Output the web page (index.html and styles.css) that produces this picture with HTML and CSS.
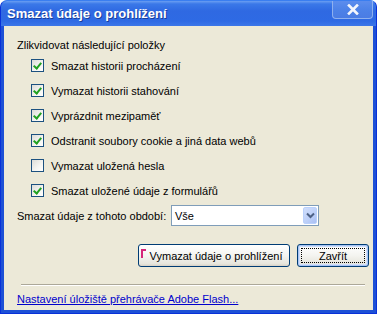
FILE: index.html
```html
<!DOCTYPE html>
<html lang="cs">
<head>
    <meta charset="UTF-8">
    <title>Smazat údaje o prohlížení</title>
    <link rel="stylesheet" href="styles.css">
</head>
<body>
    <div class="window">
        <div class="title-bar">
            <span class="title">Smazat údaje o prohlížení</span>
            <span class="close-btn">
                <svg width="12" height="11" viewBox="0 0 12 11">
                    <path d="M2 1.5 L10 9.5 M10 1.5 L2 9.5" stroke="#f4f6fc" stroke-width="2.6" stroke-linecap="square"/>
                </svg>
            </span>
        </div>
        <div class="content">
            <div class="heading">Zlikvidovat následující položky</div>
            <div class="items">
                <div class="item"><span class="check on"></span>Smazat historii procházení</div>
                <div class="item"><span class="check on"></span>Vymazat historii stahování</div>
                <div class="item"><span class="check on"></span>Vyprázdnit mezipaměť</div>
                <div class="item"><span class="check on"></span>Odstranit soubory cookie a jiná data webů</div>
                <div class="item"><span class="check"></span>Vymazat uložená hesla</div>
                <div class="item"><span class="check on"></span>Smazat uložené údaje z formulářů</div>
            </div>
            <div class="period">
                <span>Smazat údaje z tohoto období:</span>
                <div class="select">
                    <span class="select-value">Vše</span>
                    <span class="select-arrow">
                        <svg width="9" height="7" viewBox="0 0 9 7">
                            <path d="M1 1.5 L4.5 5 L8 1.5" stroke="#4d6185" stroke-width="2" fill="none"/>
                        </svg>
                    </span>
                </div>
            </div>
            <div class="buttons">
                <span class="btn wide"><span class="mark"></span>Vymazat údaje o prohlížení</span>
                <span class="btn default"><span class="focus">Zavřít</span></span>
            </div>
            <div class="separator"></div>
            <a class="flash-link" href="#">Nastavení úložiště přehrávače Adobe Flash...</a>
        </div>
    </div>
</body>
</html>
```

FILE: styles.css
```css
body {
    margin: 0;
    background-color: #ffffff;
    font-family: 'Liberation Sans', Arial, sans-serif;
    font-size: 11px;
    color: #000000;
}
.window {
    width: 377px;
    height: 314px;
    display: flex;
    flex-direction: column;
    background-color: #1d50d6;
    border-radius: 7px 7px 0 0;
    box-sizing: border-box;
    border: 1px solid #0831d9;
    border-top-color: #3a7ef0;
}
.title-bar {
    height: 25px;
    display: flex;
    align-items: flex-start;
    justify-content: space-between;
    padding: 0 3px 0 6px;
    background: linear-gradient(180deg, #6a9ef2 0%, #3a78e8 12%, #2f69e2 40%, #2e6ae4 80%, #3b76e8 100%);
    border-radius: 6px 6px 0 0;
}
.title {
    margin-top: 5px;
    color: #ffffff;
    font-weight: bold;
    font-size: 13px;
    text-shadow: 1px 1px 0 #1a3f9a;
}
.close-btn {
    width: 41px;
    height: 18px;
    display: flex;
    align-items: center;
    justify-content: center;
    box-sizing: border-box;
    border: 1px solid #8eb0ee;
    border-top: none;
    border-radius: 0 0 4px 4px;
    background: linear-gradient(180deg, #5c8ded 0%, #4d82e8 50%, #4a7ce4 100%);
}
.content {
    flex: 1;
    margin: 0 3px 3px 3px;
    background-color: #ece9d8;
    padding: 12px 0 0 13px;
    display: flex;
    flex-direction: column;
}
.heading {
    height: 14px;
    line-height: 14px;
}
.items {
    margin-top: 1px;
    display: flex;
    flex-direction: column;
}
.item {
    height: 25px;
    display: flex;
    align-items: center;
    padding-left: 14px;
}
.check {
    width: 13px;
    height: 13px;
    box-sizing: border-box;
    border: 1px solid #1c5180;
    background: linear-gradient(135deg, #dcdcd7 0%, #f5f5f2 60%, #ffffff 100%);
    margin-right: 7px;
    position: relative;
}
.check.on::after {
    content: "";
    position: absolute;
    left: 3px;
    top: 1px;
    width: 3px;
    height: 6px;
    border: solid #21a121;
    border-width: 0 2px 2px 0;
    transform: rotate(40deg);
}
.period {
    display: flex;
    align-items: center;
    margin-top: 2px;
    height: 21px;
}
.period span:first-child {
    width: 154px;
}
.select {
    width: 148px;
    height: 21px;
    box-sizing: border-box;
    border: 1px solid #7f9db9;
    background-color: #ffffff;
    display: flex;
    align-items: center;
    justify-content: space-between;
    padding: 0 1px 0 3px;
}
.select-arrow {
    width: 16px;
    height: 17px;
    display: flex;
    align-items: center;
    justify-content: center;
    box-sizing: border-box;
    border: 1px solid #bad1fc;
    border-radius: 2px;
    background: linear-gradient(135deg, #d0defc 0%, #bccff8 60%, #a9bff3 100%);
}
.buttons {
    display: flex;
    justify-content: flex-end;
    gap: 7px;
    padding-right: 4px;
    margin-top: 18px;
}
.btn {
    height: 23px;
    box-sizing: border-box;
    border: 1px solid #003c74;
    border-radius: 3px;
    background: linear-gradient(180deg, #ffffff 0%, #f4f4f0 50%, #e6e5dc 90%, #d6d0c5 100%);
    display: flex;
    align-items: center;
    justify-content: center;
    position: relative;
}
.btn.wide {
    width: 152px;
    padding-left: 4px;
}
.btn.default {
    width: 72px;
    box-shadow: inset 0 0 0 1px #a8c4f4, inset 0 0 0 2px #cfdefa;
}
.focus {
    display: flex;
    align-items: center;
    justify-content: center;
    width: 64px;
    height: 15px;
    border: 1px dotted #000000;
    box-sizing: border-box;
}
.mark {
    position: absolute;
    left: 2px;
    top: 4px;
    width: 3px;
    height: 7px;
    border-left: 2px solid #d5257a;
    border-top: 2px solid #d5257a;
}
.separator {
    margin: 17px 8px 0 4px;
    height: 0;
    border-top: 1px solid #aca899;
    border-bottom: 1px solid #ffffff;
}
.flash-link {
    margin-top: 6px;
    color: #0000cc;
    text-decoration: underline;
    line-height: 14px;
}
```
